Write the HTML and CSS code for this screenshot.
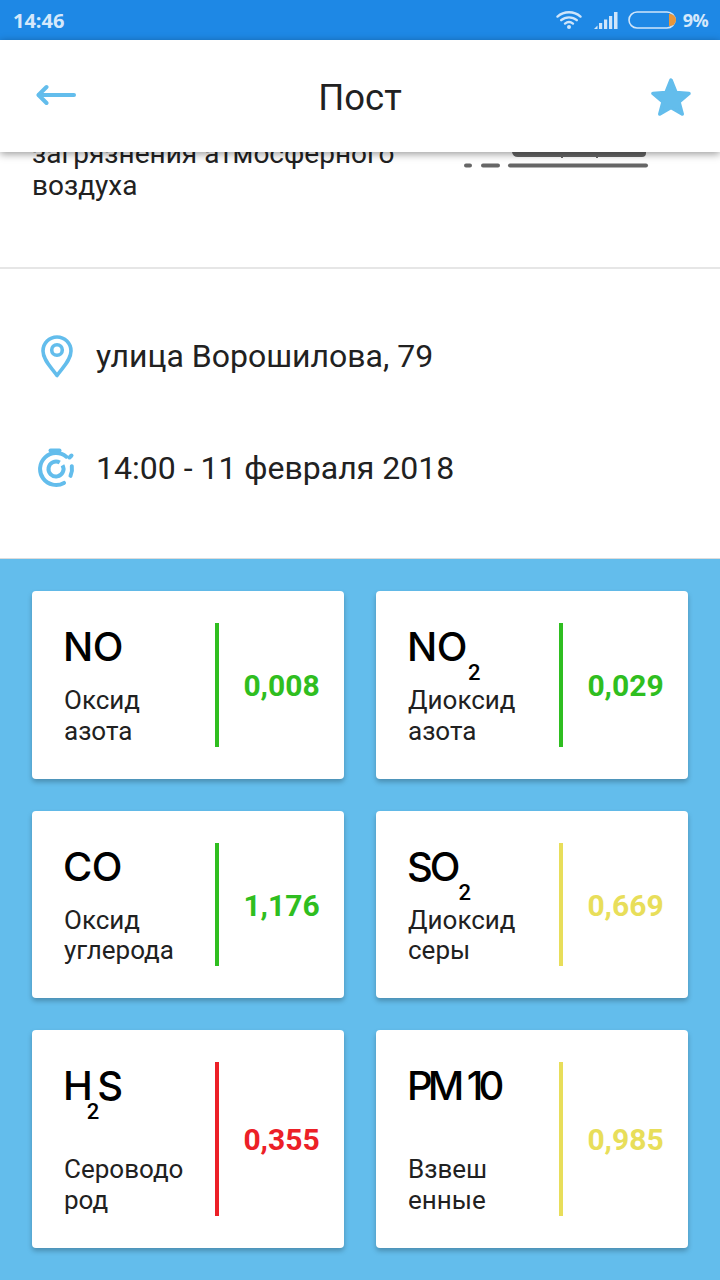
FILE: index.html
```html
<!DOCTYPE html>
<html lang="ru">
<head>
<meta charset="utf-8">
<title>Пост</title>
<link rel="stylesheet" href="styles.css">
</head>
<body>
<div class="page">
  <header class="statusbar">
    <span class="time">14:46</span>
    <div class="status-right">
      <svg class="ic-wifi" width="26" height="18" viewBox="0 0 26 18" fill="none" stroke="#cfe5fa" stroke-width="2.4" stroke-linecap="round"><path d="M1.5 5.6C8 -.2 18 -.2 24.5 5.6"/><path d="M5.2 9.2c4.4-3.8 11.2-3.8 15.600 0"/><path d="M9 12.600c2.300-1.800 5.700-1.800 8 0"/><circle cx="13" cy="16" r="2" fill="#cfe5fa" stroke="none"/></svg>
      <svg class="ic-signal" width="24" height="17" viewBox="0 0 24 17" fill="#cfe5fa"><path d="M0 17l3.500-3.500V17z"/><rect x="5" y="11" width="3.200" height="6"/><rect x="10" y="7.500" width="3.200" height="9.500"/><rect x="15" y="4" width="3.200" height="13"/><rect x="20" y="0" width="3.500" height="17"/></svg>
      <svg class="ic-batt" width="48" height="18" viewBox="0 0 48 18"><rect x="1" y="1" width="46" height="16" rx="8" fill="none" stroke="#cfe5fa" stroke-width="1.600"/><path d="M41 3h1a6 6 0 0 1 0 12h-1z" fill="#e8963a"/></svg>
      <span class="pct">9%</span>
    </div>
  </header>
  <nav class="appbar">
    <svg class="ic-back" width="40" height="22" viewBox="0 0 40 22" fill="none" stroke="#63bdec" stroke-width="4" stroke-linecap="round" stroke-linejoin="round"><path d="M38 11H3"/><path d="M10.500 3L2.500 11l8 8"/></svg>
    <h1 class="title">Пост</h1>
    <svg class="ic-star" width="40" height="38" viewBox="0 0 40 38" fill="#63bdec" stroke="#63bdec" stroke-width="3.500" stroke-linejoin="round"><path d="M20 2l5 12.500 13 1-10 8.500 3.200 12L20 29.500 8.800 36 12 24 2 15.500l13-1z"/></svg>
  </nav>
  <section class="intro">
    <p class="intro-text">загрязнения атмосферного<br>воздуха</p>
    <svg class="intro-art" width="186" height="18" viewBox="0 0 186 18" fill="#666"><path d="M49 0h134v1a4 4 0 0 1-4 4H55a6 6 0 0 1-6-5z"/><rect x="98" y="3" width="2" height="3"/><rect x="133" y="3" width="2" height="3"/><rect x="1" y="11.500" width="8" height="4" rx="2"/><rect x="18" y="11.500" width="19" height="4" rx="2"/><rect x="45" y="11.500" width="140" height="4" rx="2"/></svg>
  </section>
  <section class="info">
    <div class="info-row">
      <span class="info-icon"><svg width="32" height="43" viewBox="0 0 32 43" fill="none" stroke="#63bdec" stroke-width="3.600"><path d="M16 40.500C11 33 2 25.500 2 16a14 14 0 0 1 28 0c0 9.500-9 17-14 24.500z" stroke-linejoin="round"/><circle cx="16" cy="15" r="5.300"/></svg></span>
      <span class="info-text">улица Ворошилова, 79</span>
    </div>
    <div class="info-row">
      <span class="info-icon"><svg width="38" height="41" viewBox="0 0 38 41" fill="none" stroke="#63bdec" stroke-width="4" stroke-linecap="round"><path d="M12.500 2.500h9"/><path d="M17 3v2"/><path d="M31.500 9.500L33.500 7.500"/><path d="M26 34.900A16 16 0 1 1 28.300 8.700"/><path d="M33.800 18.200A16 16 0 0 1 32.500 27.800"/><path d="M24.500 17.250A7.500 7.500 0 1 1 21.750 14.500" stroke-linecap="butt"/></svg></span>
      <span class="info-text">14:00 - 11 февраля 2018</span>
    </div>
  </section>
  <main class="grid">
    <article class="card">
      <div class="card-main"><div class="formula">NO</div><div class="label">Оксид<br>азота</div></div>
      <div class="rule good"></div><div class="value good-text">0,008</div>
    </article>
    <article class="card">
      <div class="card-main"><div class="formula">NO<sub class="idx">2</sub></div><div class="label">Диоксид<br>азота</div></div>
      <div class="rule good"></div><div class="value good-text">0,029</div>
    </article>
    <article class="card">
      <div class="card-main"><div class="formula">CO</div><div class="label">Оксид<br>углерода</div></div>
      <div class="rule good"></div><div class="value good-text">1,176</div>
    </article>
    <article class="card">
      <div class="card-main"><div class="formula formula-so">SO<sub class="idx">2</sub></div><div class="label">Диоксид<br>серы</div></div>
      <div class="rule warn"></div><div class="value warn-text">0,669</div>
    </article>
    <article class="card">
      <div class="card-main"><div class="formula formula-tall">H<sub class="idx idx-mid">2</sub>S</div><div class="label">Сероводо<br>род</div></div>
      <div class="rule bad"></div><div class="value bad-text">0,355</div>
    </article>
    <article class="card">
      <div class="card-main"><div class="formula formula-pm">PM 10</div><div class="label">Взвеш<br>енные</div></div>
      <div class="rule warn"></div><div class="value warn-text">0,985</div>
    </article>
  </main>
</div>
</body>
</html>
```
FILE: styles.css
```css
* { box-sizing: border-box; }
html, body { margin: 0; padding: 0; }
body { font-family: Roboto, "Noto Sans", sans-serif; color: #212121; background: #fff; }
.page { width: 720px; height: 1280px; overflow: hidden; display: flex; flex-direction: column; }

.statusbar { height: 40px; flex: none; background: #1e88e5; display: flex; align-items: center; justify-content: space-between; padding: 0 12px 0 13px; color: #d5e8fb; font-family: "Open Sans", sans-serif; font-weight: 700; font-size: 20px; }
.status-right { display: flex; align-items: center; }
.ic-wifi { margin-right: 12px; }
.ic-signal { margin-right: 10px; }
.ic-batt { margin-right: 7px; }
.pct { font-size: 18px; letter-spacing: -.6px; }

.appbar { height: 112px; flex: none; background: #fff; display: grid; grid-template-columns: 1fr auto 1fr; align-items: center; padding: 0 29px; box-shadow: 0 2px 8px rgba(0,0,0,.4); position: relative; z-index: 2; }
.title { margin: 4px 0 0; font-weight: 400; font-size: 36.500px; line-height: 40px; color: #212121; }
.ic-back { margin: -3px 0 0 7px; }
.ic-star { justify-self: end; margin-top: 2px; }

.intro { height: 117px; flex: none; display: flex; justify-content: space-between; overflow: hidden; border-bottom: 2px solid #e6e6e6; padding: 0 71px 0 32px; }
.intro-text { margin: 0 0 65px; align-self: flex-end; font-size: 28px; line-height: 32px; white-space: nowrap; }
.intro-art { flex: none; }

.info { height: 290px; flex: none; padding: 31px 0 34px; border-bottom: 1px solid #dcdcdc; }
.info-row { height: 112px; display: flex; align-items: center; padding-left: 38px; gap: 20px; }
.info-icon { width: 38px; flex: none; display: flex; justify-content: center; }
.info-text { font-size: 32px; color: #212121; }

.grid { flex: 1; background: #63bdec; padding: 32px; display: grid; grid-template-columns: 312px 312px; grid-auto-rows: min-content; gap: 32px; align-content: start; }
.card { background: #fff; border-radius: 4px; box-shadow: 0 3px 5px rgba(0,0,0,.25); padding: 32px 0 32px 32px; display: flex; }
.card-main { width: 151px; flex: none; display: flex; flex-direction: column; justify-content: space-between; }
.formula { height: 62px; margin-left: -1px; font-family: Inter, sans-serif; font-weight: 500; font-size: 40px; line-height: 48px; letter-spacing: -.5px; color: #000; white-space: nowrap; }
.formula-tall { height: 92px; letter-spacing: -6px; }
.formula-so { letter-spacing: -3px; }
.formula-pm { letter-spacing: -5px; word-spacing: 2px; }
.idx { font-family: Roboto, sans-serif; font-weight: 500; font-size: 22px; line-height: 0; letter-spacing: 0; vertical-align: -19px; margin-left: 1px; }
.idx-mid { margin: 0 -2px 0 0; }
.label { font-size: 26px; line-height: 30.750px; color: #212121; }
.rule { width: 4px; flex: none; }
.good { background: #2fbe20; }
.warn { background: #e8de5a; }
.bad { background: #ec2027; }
.value { flex: 1; display: flex; align-items: center; justify-content: center; padding-top: 2px; font-weight: 700; font-size: 30px; }
.good-text { color: #2fbe20; }
.warn-text { color: #e8de5a; }
.bad-text { color: #ec2027; }
```
